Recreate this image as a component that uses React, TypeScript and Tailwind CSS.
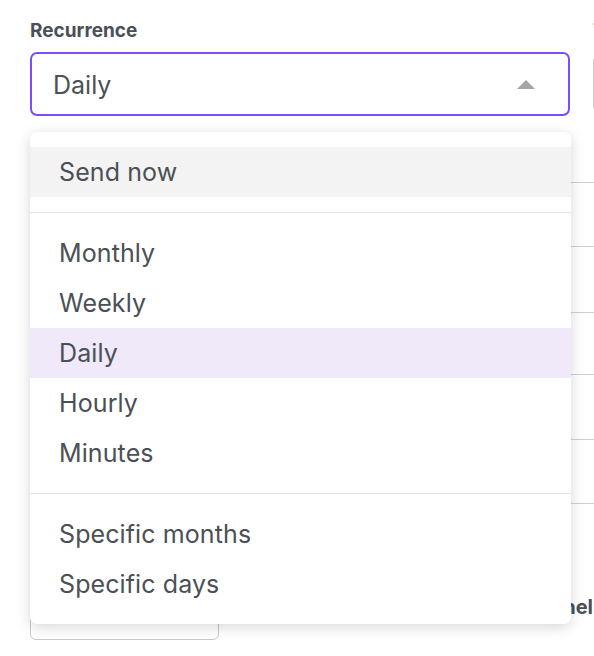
const groups = [
  ['Send now'],
  ['Monthly', 'Weekly', 'Daily', 'Hourly', 'Minutes'],
  ['Specific months', 'Specific days'],
];

const rowHeights = ['h-[67px]', 'h-[64px]', 'h-[66px]', 'h-[62px]', 'h-[65px]', 'h-[64px]'];

function Caret() {
  return (
    <svg width="18" height="9" viewBox="0 0 18 9" className="shrink-0">
      <path d="M9 0 L18 9 L0 9 Z" fill="#a6a6a6" />
    </svg>
  );
}

export default function App() {
  const hovered = 'Send now';
  const selected = 'Daily';

  return (
    <div className="relative h-[656px] w-[594px] overflow-hidden bg-white font-['Inter',sans-serif] text-[#4b5056]">
      {/* form behind the menu */}
      <div className="flex gap-[23px] pl-[30px] pt-[18px]">
        <div className="w-[540px] shrink-0">
          <label className="block text-[19px] font-bold leading-[26px]">Recurrence</label>
          <button className="mt-[8px] flex h-[64px] w-full items-center justify-between rounded-[7px] border-2 border-[#7c4dff] bg-white pl-[21px] pr-[33px] pt-[3px] text-[25px]">
            <span>Daily</span>
            <span className="-mt-[3px]">
              <Caret />
            </span>
          </button>
        </div>
        <div className="w-[300px] shrink-0">
          <label className="block text-[19px] font-bold leading-[26px]">Time zone</label>
          <div className="mt-[11px] h-[57px] rounded-[6px] border border-[#c9c9c9]" />
        </div>
      </div>

      <div className="ml-[30px] w-[600px]">
        {rowHeights.map((h, i) => (
          <div key={i} className={`${h} border-b border-[#d0d0d0]`} />
        ))}
      </div>

      <div className="ml-[30px] mt-[88px] flex w-[563px] items-start justify-between">
        <div className="h-[48px] w-[189px] rounded-[6px] border border-[#c9c9c9]" />
        <span className="mt-[3px] text-[20px] font-bold leading-[24px]">Channel</span>
      </div>

      {/* open menu */}
      <div className="absolute left-[30px] top-[132px] w-[541px] rounded-[7px] bg-white shadow-[0_3px_14px_rgba(0,0,0,0.16)]">
        {groups.map((items, gi) => (
          <div key={gi} className={`py-[15px] ${gi > 0 ? 'border-t border-[#e2e2e2]' : ''}`}>
            {items.map((item) => (
              <div
                key={item}
                className={`flex h-[50px] items-center px-[29px] pt-[1px] text-[25px] tracking-[0.1px] ${
                  item === hovered ? 'bg-[#f3f3f3]' : item === selected ? 'bg-[#efe9fa]' : ''
                }`}
              >
                {item}
              </div>
            ))}
          </div>
        ))}
      </div>
    </div>
  );
}
